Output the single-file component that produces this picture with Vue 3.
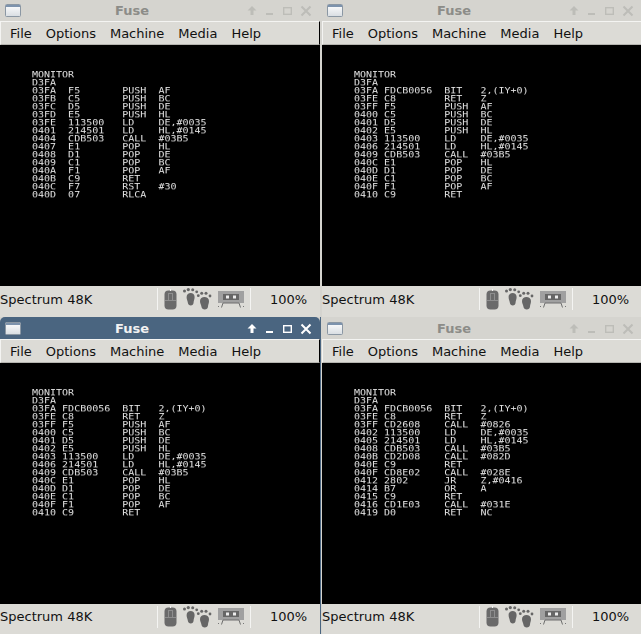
<script setup>
const row = (a, b = '', c = '', d = '', w = 9) => a.padEnd(15 - w) + b.padEnd(w) + c.padEnd(6) + d
const wide = (a, b, c, d) => row(a, b, c, d, 10)
const mid = [
  wide('03FA', 'FDCB0056', 'BIT', '2,(IY+0)'),
  wide('03FE', 'C8', 'RET', 'Z'),
  wide('03FF', 'F5', 'PUSH', 'AF'),
  wide('0400', 'C5', 'PUSH', 'BC'),
  wide('0401', 'D5', 'PUSH', 'DE'),
  wide('0402', 'E5', 'PUSH', 'HL'),
  wide('0403', '113500', 'LD', 'DE,#0035'),
  wide('0406', '214501', 'LD', 'HL,#0145'),
  wide('0409', 'CDB503', 'CALL', '#03B5'),
  wide('040C', 'E1', 'POP', 'HL'),
  wide('040D', 'D1', 'POP', 'DE'),
  wide('040E', 'C1', 'POP', 'BC'),
  wide('040F', 'F1', 'POP', 'AF'),
  wide('0410', 'C9', 'RET')
]
const windows = [
  {
    id: 1, active: false,
    lines: [
      row('03FA', 'F5', 'PUSH', 'AF'),
      row('03FB', 'C5', 'PUSH', 'BC'),
      row('03FC', 'D5', 'PUSH', 'DE'),
      row('03FD', 'E5', 'PUSH', 'HL'),
      row('03FE', '113500', 'LD', 'DE,#0035'),
      row('0401', '214501', 'LD', 'HL,#0145'),
      row('0404', 'CDB503', 'CALL', '#03B5'),
      row('0407', 'E1', 'POP', 'HL'),
      row('0408', 'D1', 'POP', 'DE'),
      row('0409', 'C1', 'POP', 'BC'),
      row('040A', 'F1', 'POP', 'AF'),
      row('040B', 'C9', 'RET'),
      row('040C', 'F7', 'RST', '#30'),
      row('040D', '07', 'RLCA')
    ]
  },
  { id: 2, active: false, lines: mid },
  { id: 3, active: true, lines: mid },
  {
    id: 4, active: false,
    lines: [
      wide('03FA', 'FDCB0056', 'BIT', '2,(IY+0)'),
      wide('03FE', 'C8', 'RET', 'Z'),
      wide('03FF', 'CD2608', 'CALL', '#0826'),
      wide('0402', '113500', 'LD', 'DE,#0035'),
      wide('0405', '214501', 'LD', 'HL,#0145'),
      wide('0408', 'CDB503', 'CALL', '#03B5'),
      wide('040B', 'CD2D08', 'CALL', '#082D'),
      wide('040E', 'C9', 'RET'),
      wide('040F', 'CD8E02', 'CALL', '#028E'),
      wide('0412', '2802', 'JR', 'Z,#0416'),
      wide('0414', 'B7', 'OR', 'A'),
      wide('0415', 'C9', 'RET'),
      wide('0416', 'CD1E03', 'CALL', '#031E'),
      wide('0419', 'D0', 'RET', 'NC')
    ]
  }
]
const menus = ['File', 'Options', 'Machine', 'Media', 'Help']
</script>

<template>
  <div class="desk">
    <section v-for="w in windows" :key="w.id" class="win" :class="{ active: w.active, lower: w.id > 2, right: w.id % 2 === 0 }">
      <header class="title">
        <svg class="appicon" width="16" height="13" viewBox="0 0 16 13">
          <defs>
            <linearGradient :id="'g' + w.id" x1="0" y1="0" x2="0" y2="1">
              <stop offset="0" stop-color="#ffffff" />
              <stop offset="1" stop-color="#d8dde2" />
            </linearGradient>
          </defs>
          <rect x="0.5" y="0.5" width="15" height="12" rx="1" :fill="'url(#g' + w.id + ')'" stroke="#8b97a3" />
          <rect x="1" y="1" width="14" height="2" fill="#7d93ad" />
        </svg>
        <span class="name">Fuse</span>
        <div class="btns">
          <svg width="12" height="12" viewBox="0 0 12 12"><path d="M6 1 L10.5 5.5 H7.5 V10 H4.5 V5.5 H1.5 Z" fill="currentColor" /></svg>
          <svg width="12" height="12" viewBox="0 0 12 12"><rect x="2" y="8" width="7" height="2" fill="currentColor" /></svg>
          <svg width="12" height="12" viewBox="0 0 12 12"><rect x="1.7" y="2.7" width="7.6" height="6.6" fill="none" stroke="currentColor" stroke-width="1.4" /></svg>
          <svg width="12" height="12" viewBox="0 0 12 12"><path d="M1.5 1.5 L10.5 10.5 M10.5 1.5 L1.5 10.5" stroke="currentColor" stroke-width="2" fill="none" /></svg>
        </div>
      </header>
      <nav class="menu">
        <span v-for="m in menus" :key="m">{{ m }}</span>
      </nav>
      <main class="screen">
        <div class="listing">
          <div>MONITOR</div>
          <div>D3FA</div>
          <div v-for="(l, i) in w.lines" :key="i">{{ l }}</div>
        </div>
      </main>
      <footer class="status">
        <span class="model">Spectrum 48K</span>
        <div class="icons">
          <svg width="13" height="21" viewBox="0 0 13 21">
            <rect x="0.5" y="1.5" width="12" height="19" rx="4" fill="#6a6a6a" />
            <rect x="4.5" y="4.5" width="4" height="7" fill="none" stroke="#8e8e8e" />
            <path d="M1 11.5 H12" stroke="#8e8e8e" />
            <rect x="6" y="0" width="1" height="2" fill="#f4f4f4" />
          </svg>
          <svg width="29" height="22" viewBox="0 0 29 22" fill="#666">
            <path d="M3.6 9 C3.6 6.2 5.6 5 7.6 5 C9.8 5 11.6 6.4 11.6 9 C11.6 11.5 10.6 12.5 10.6 14.5 C10.6 16.4 9.2 17.5 7.8 17.5 C6.2 17.5 5 16.4 4.8 14.5 C4.6 12.6 3.6 11.5 3.6 9 Z" />
            <path d="M17 13 C17 10.2 19.2 9 21.4 9 C23.8 9 26 10.4 26 13 C26 15.5 25 16.5 25 18.5 C25 20.4 23.4 21.5 21.8 21.5 C20 21.5 18.6 20.4 18.4 18.5 C18.2 16.6 17 15.5 17 13 Z" />
            <circle cx="1.5" cy="3" r="1.5" /><circle cx="5.3" cy="1.6" r="1.6" /><circle cx="9.7" cy="1.8" r="1.5" /><circle cx="13.7" cy="3.8" r="1.4" />
            <circle cx="15.3" cy="7.7" r="1.4" /><circle cx="18.7" cy="5.2" r="1.5" /><circle cx="23" cy="5.2" r="1.5" /><circle cx="27" cy="8" r="1.4" />
          </svg>
          <svg width="26" height="17" viewBox="0 0 26 17">
            <rect x="0" y="0" width="26" height="12" fill="#a0a0a0" />
            <rect x="5" y="3" width="16" height="6" fill="#666" />
            <rect x="8" y="4.5" width="3" height="3" fill="#ececec" /><rect x="15" y="4.5" width="3" height="3" fill="#ececec" />
            <path d="M5 12 H21 L22.5 16.5 M5 12 L3.5 16.5" stroke="#6e6e6e" fill="none" />
            <rect x="0" y="15" width="1" height="1" fill="#777" /><rect x="25" y="15" width="1" height="1" fill="#777" />
          </svg>
        </div>
        <span class="speed">100%</span>
      </footer>
    </section>
  </div>
</template>

<style scoped>
.desk {
  display: grid;
  grid-template-columns: 322px 319px;
  grid-template-rows: 317px 317px;
  width: 641px;
  height: 634px;
  overflow: hidden;
  background: #d5d4cf;
}
.win {
  display: flex;
  flex-direction: column;
  overflow: hidden;
  box-sizing: border-box;
  width: 321px;
  border-right: 1px solid #d5d4cf;
}
.win.right { width: 319px; border-right: 0; }
.win.active { border-right-color: #4a6580; }
.title {
  position: relative;
  flex: 0 0 21px;
  box-sizing: border-box;
  display: flex;
  align-items: center;
  justify-content: center;
  padding-right: 56px;
  width: 320px;
  background: #d5d4cf;
  color: #8c8c88;
  font: bold 13px "DejaVu Sans", sans-serif;
}
.win.lower .title { flex-basis: 22px; }
.win.active .title {
  background: #4a6580;
  color: #f2f2f2;
  border-radius: 5px 5px 0 0;
}
.appicon { position: absolute; left: 5px; top: 4px; }
.win.lower .appicon { top: 5px; }
.btns {
  position: absolute;
  right: 8px;
  top: 5px;
  display: flex;
  gap: 6px;
  color: #bdbdb8;
}
.win.lower .btns { top: 6px; }
.win.active .btns { color: #fff; }
.menu {
  flex: 0 0 24px;
  box-sizing: border-box;
  width: 320px;
  display: flex;
  align-items: center;
  gap: 14px;
  padding: 0 0 0 9px;
  background: #dcdbd6;
  border-top: 1px solid #f4f4f2;
  border-left: 1px solid #f4f4f2;
  border-right: 1px solid #000;
  border-bottom: 1px solid #b5b4af;
  color: #111;
  font: 13px "DejaVu Sans", sans-serif;
}
.screen {
  flex: 0 0 241px;
  box-sizing: border-box;
  padding: 26px 0 0 32px;
  background: #000;
  color: #e2e2e2;
  font: 10px/10px "DejaVu Sans Mono", monospace;
  white-space: pre;
  overflow: hidden;
}
.listing {
  transform: scaleY(0.8);
  transform-origin: 0 0;
  will-change: transform;
}
.status {
  flex: 1 1 0;
  width: 320px;
  display: flex;
  align-items: center;
  background: #dcdbd6;
  color: #111;
  font: 13px "DejaVu Sans", sans-serif;
  padding-bottom: 5px;
}
.model { width: 157px; white-space: nowrap; }
.icons {
  box-sizing: border-box;
  width: 94px;
  height: 22px;
  display: flex;
  align-items: center;
  gap: 6px;
  padding-left: 6px;
  border-left: 1px solid #f4f4f2;
  border-right: 1px solid #f4f4f2;
}
.speed { flex: 1; text-align: center; padding-left: 6px; }
</style>
